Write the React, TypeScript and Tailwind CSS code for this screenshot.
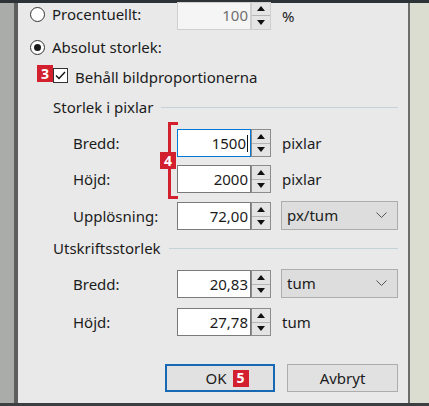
import { ReactNode } from "react";

const font = { fontFamily: '"Noto Sans", "Liberation Sans", sans-serif' };

const Badge = ({ n, className = "" }: { n: string; className?: string }) => (
  <div
    className={`flex h-[17px] w-[16px] items-center justify-center bg-[#d3202f] text-[14px] font-bold leading-none text-white ${className}`}
  >
    {n}
  </div>
);

const Radio = ({ checked }: { checked?: boolean }) => (
  <div className="flex h-[15px] w-[15px] items-center justify-center rounded-full border border-[#333] bg-white">
    {checked && <div className="h-[7px] w-[7px] rounded-full bg-[#1a1a1a]" />}
  </div>
);

const Arrow = ({ up }: { up?: boolean }) => (
  <svg width="8" height="5" viewBox="0 0 8 5">
    {up ? <path d="M0 5 L4 0 L8 5 Z" fill="#111" /> : <path d="M0 0 L4 5 L8 0 Z" fill="#111" />}
  </svg>
);

const Spin = ({
  value,
  focused,
  disabled,
}: {
  value: string;
  focused?: boolean;
  disabled?: boolean;
}) => (
  <div className="flex h-[28px]">
    <div
      className={`flex w-[74px] items-center justify-end pr-[2px] text-[15px] ${
        disabled
          ? "border border-[#cfcfcf] bg-[#f5f5f5] text-[#6f6f6f]"
          : focused
            ? "border border-[#0078d7] bg-white text-[#1b1b1b]"
            : "border border-[#7a7a7a] bg-white text-[#1b1b1b]"
      }`}
    >
      {value}
      {focused && <span className="ml-[1px] h-[17px] w-[1px] bg-[#111]" />}
    </div>
    <div
      className={`flex w-[20px] flex-col border ${
        disabled ? "border-[#cfcfcf]" : "border-[#8c8c8c]"
      } bg-[#e4e4e4]`}
    >
      <div className="flex flex-1 items-center justify-center border-b border-[#b5b5b5]">
        <Arrow up />
      </div>
      <div className="flex flex-1 items-center justify-center">
        <Arrow />
      </div>
    </div>
  </div>
);

const Select = ({ value }: { value: string }) => (
  <div className="flex h-[29px] w-[117px] items-center justify-between border border-[#adadad] bg-[#dddddd] pl-[5px] pr-[10px] text-[15px] text-[#1b1b1b]">
    <span>{value}</span>
    <svg width="11" height="6" viewBox="0 0 11 6">
      <path d="M0.5 0.5 L5.5 5.5 L10.5 0.5" fill="none" stroke="#555" strokeWidth="1" />
    </svg>
  </div>
);

const FieldRow = ({
  label,
  children,
  className = "",
}: {
  label: string;
  children: ReactNode;
  className?: string;
}) => (
  <div className={`flex h-[28px] items-center ${className}`}>
    <div className="w-[104px] pl-[55px] text-[15px] whitespace-nowrap">{label}</div>
    {children}
  </div>
);

const GroupTitle = ({ title, className = "" }: { title: string; className?: string }) => (
  <div className={`flex h-[18px] items-center pl-[35px] pr-[10px] ${className}`}>
    <span className="text-[15px] whitespace-nowrap">{title}</span>
    <div className="ml-[8px] h-[1px] flex-1 bg-[#c3d3da]" />
  </div>
);

export default function App() {
  return (
    <div
      className="flex h-[406px] w-[429px] flex-col overflow-hidden bg-[#2d3236] text-[#1b1b1b]"
      style={font}
    >
      <div className="h-[3px]" />
      <div className="flex flex-1">
        <div className="w-[14px] bg-[#a9aca8]" />
        <div className="w-[4px] bg-[#5c5f5d]" />
        <div className="flex w-[390px] flex-col bg-[#e9e9e9]">
          {/* Procentuellt */}
          <div className="flex h-[27px] items-center">
            <div className="flex w-[159px] items-center pl-[12px] -mt-[5px]">
              <Radio />
              <span className="ml-[7px] text-[15px]">Procentuellt:</span>
            </div>
            <div className="-mt-[2px]">
              <Spin value="100" disabled />
            </div>
            <span className="ml-[11px] text-[15px]">%</span>
          </div>

          {/* Absolut storlek */}
          <div className="mt-[9px] flex h-[16px] items-center pl-[12px]">
            <Radio checked />
            <span className="ml-[7px] text-[15px]">Absolut storlek:</span>
          </div>

          {/* checkbox */}
          <div className="mt-[9px] flex h-[22px] items-start pl-[19px]">
            <Badge n="3" className="mt-[1px]" />
            <div className="mt-[4px] flex h-[15px] w-[15px] items-center justify-center border border-[#333] bg-white">
              <svg width="11" height="9" viewBox="0 0 11 9">
                <path d="M1 4.5 L4 7.5 L10 1" fill="none" stroke="#111" strokeWidth="1.4" />
              </svg>
            </div>
            <span className="ml-[7px] mt-[2px] text-[15px]">Behåll bildproportionerna</span>
          </div>

          <GroupTitle title="Storlek i pixlar" className="mt-[12px]" />

          <div className="relative">
            <FieldRow label="Bredd:" className="mt-[13px]">
              <div className="ml-[55px]">
                <Spin value="1500" focused />
              </div>
              <span className="ml-[11px] text-[15px]">pixlar</span>
            </FieldRow>
            <FieldRow label="Höjd:" className="mt-[8px]">
              <div className="ml-[55px]">
                <Spin value="2000" />
              </div>
              <span className="ml-[11px] text-[15px]">pixlar</span>
            </FieldRow>
            {/* annotation bracket */}
            <div className="absolute left-[150px] top-[6px] h-[77px] w-[10px] border-y-[3px] border-l-[3px] border-[#d3202f]" />
            <Badge n="4" className="absolute left-[142px] top-[36px]" />
          </div>

          <FieldRow label="Upplösning:" className="mt-[9px]">
            <div className="ml-[55px]">
              <Spin value="72,00" />
            </div>
            <div className="ml-[10px] -mt-[2px]">
              <Select value="px/tum" />
            </div>
          </FieldRow>

          <GroupTitle title="Utskriftsstorlek" className="mt-[9px]" />

          <FieldRow label="Bredd:" className="mt-[13px]">
            <div className="ml-[55px]">
              <Spin value="20,83" />
            </div>
            <div className="ml-[10px] -mt-[2px]">
              <Select value="tum" />
            </div>
          </FieldRow>
          <FieldRow label="Höjd:" className="mt-[10px]">
            <div className="ml-[55px]">
              <Spin value="27,78" />
            </div>
            <span className="ml-[11px] text-[15px]">tum</span>
          </FieldRow>

          <div className="mt-[28px] flex h-[28px] pl-[147px]">
            <div className="flex w-[110px] items-center justify-center gap-[6px] border-2 border-[#1769b3] bg-[#e1e1e1] text-[15px]">
              <span className="ml-[14px]">OK</span>
              <Badge n="5" />
            </div>
            <div className="ml-[12px] flex w-[111px] items-center justify-center border border-[#adadad] bg-[#e1e1e1] text-[15px]">
              Avbryt
            </div>
          </div>
        </div>
        <div className="w-[2px] bg-[#6a6d6a]" />
        <div className="flex-1 bg-[#dcddd1]" />
      </div>
      <div className="h-[3px] bg-[#3b3f42]" />
    </div>
  );
}
